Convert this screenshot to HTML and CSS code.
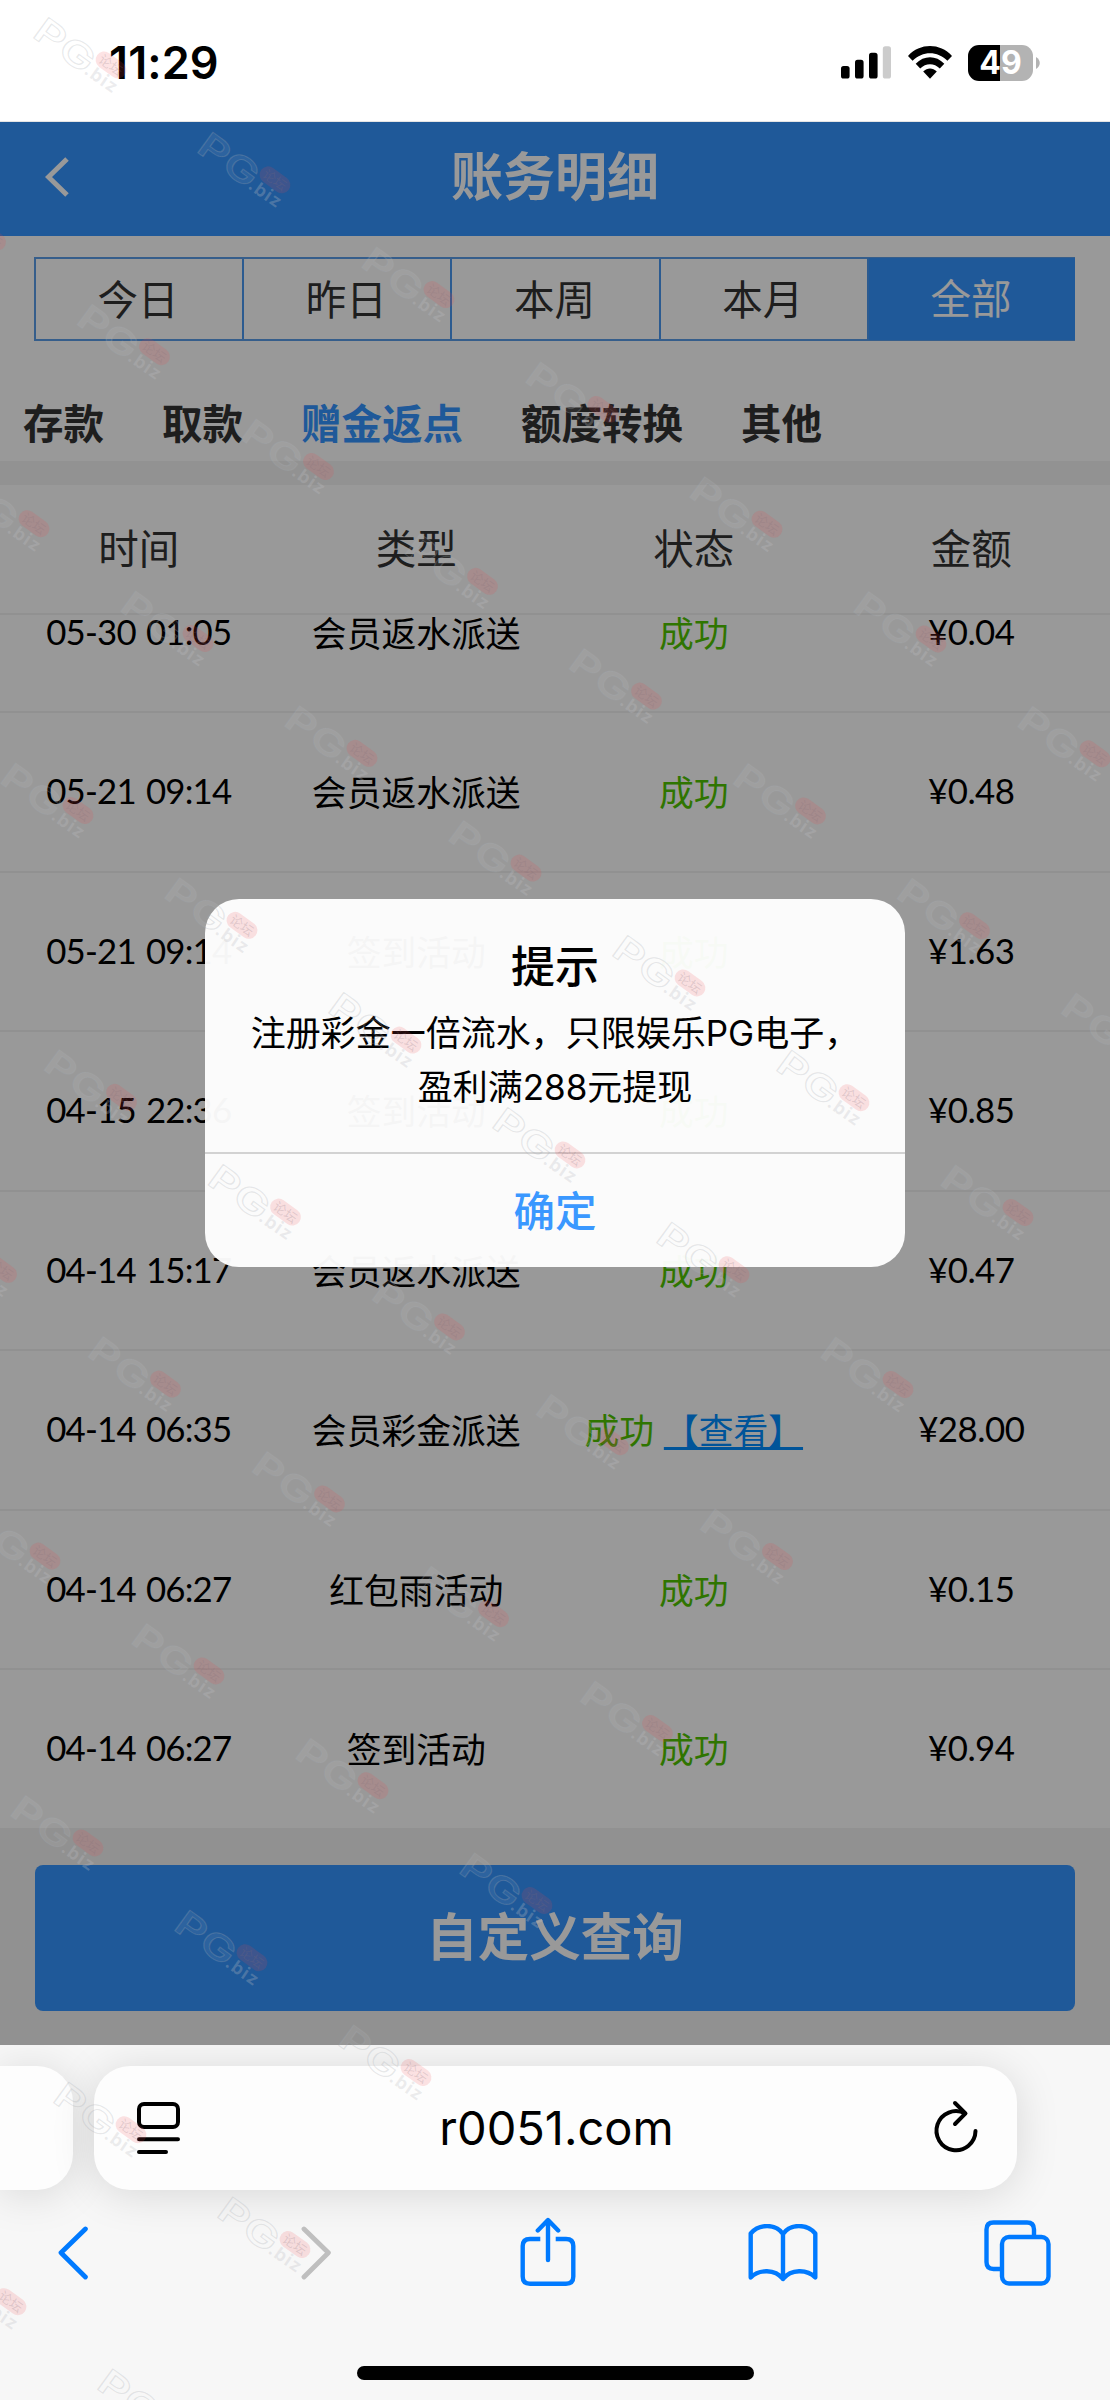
FILE: index.html
```html
<!DOCTYPE html>
<html lang="zh-CN">
<head>
<meta charset="utf-8">
<title>账务明细</title>
<link rel="stylesheet" href="styles.css">
</head>
<body>
<div class="phone">
  <header class="status">
    <span class="time">11:29</span>
    <div class="status-icons">
      <svg class="signal" width="50" height="33" viewBox="0 0 50 33">
        <rect x="0" y="20" width="8.6" height="12.5" rx="2.6"/>
        <rect x="14" y="13.8" width="8.6" height="18.7" rx="2.6"/>
        <rect x="28" y="6.8" width="8.6" height="25.7" rx="2.6"/>
        <rect x="41.8" y="0.3" width="8.2" height="32.2" rx="2.6" fill="#ccc"/>
      </svg>
      <svg class="wifi" width="44" height="33" viewBox="0 0 44 33">
        <path d="M0 9.9C12-3.3 32-3.3 44 9.9L39.4 14.8C29.6 4.7 14.4 4.7 4.6 14.8Z"/>
        <path d="M7.7 17.8C16 9.2 28 9.2 36.3 17.8L31.8 22.5C26.2 16.8 17.8 16.8 12.2 22.5Z"/>
        <path d="M15.2 25.6C19.3 21.6 24.7 21.6 28.8 25.6L22 32.8Z"/>
      </svg>
      <div class="battery"><span>49</span></div>
      <svg class="nub" width="4" height="12" viewBox="0 0 4 12"><path d="M0 0C5 3 5 9 0 12Z" fill="#b3b3b3"/></svg>
    </div>
  </header>

  <main class="page">
    <div class="titlebar">
      <svg class="back" width="24" height="40" viewBox="0 0 24 40"><path d="M22 2L3.500 20L22 38" fill="none" stroke="#fff" stroke-width="5"/></svg>
      <h1>账务明细</h1>
    </div>
    <nav class="ranges">
      <a>今日</a><a>昨日</a><a>本周</a><a>本月</a><a class="active">全部</a>
    </nav>
    <nav class="kinds">
      <a>存款</a><a>取款</a><a class="active">赠金返点</a><a>额度转换</a><a>其他</a>
    </nav>
    <div class="row head"><span>时间</span><span>类型</span><span>状态</span><span>金额</span></div>
    <div class="list">
      <div class="rows">
        <div class="row"><span>05-30 01:05</span><span>会员返水派送</span><span class="ok">成功</span><span>¥0.04</span></div>
        <div class="row"><span>05-21 09:14</span><span>会员返水派送</span><span class="ok">成功</span><span>¥0.48</span></div>
        <div class="row"><span>05-21 09:14</span><span>签到活动</span><span class="ok">成功</span><span>¥1.63</span></div>
        <div class="row"><span>04-15 22:36</span><span>签到活动</span><span class="ok">成功</span><span>¥0.85</span></div>
        <div class="row"><span>04-14 15:17</span><span>会员返水派送</span><span class="ok">成功</span><span>¥0.47</span></div>
        <div class="row"><span>04-14 06:35</span><span>会员彩金派送</span><span class="ok">成功 <a>【查看】</a></span><span>¥28.00</span></div>
        <div class="row"><span>04-14 06:27</span><span>红包雨活动</span><span class="ok">成功</span><span>¥0.15</span></div>
        <div class="row"><span>04-14 06:27</span><span>签到活动</span><span class="ok">成功</span><span>¥0.94</span></div>
      </div>
    </div>
    <footer class="query"><button>自定义查询</button></footer>

    <div class="mask"></div>
    <div class="dialog">
      <div class="dialog-body">
        <h2>提示</h2>
        <p>注册彩金一倍流水，只限娱乐PG电子，<br>盈利满288元提现</p>
      </div>
      <button>确定</button>
    </div>
  </main>

  <section class="browser">
    <div class="address-row">
      <div class="pill previous"></div>
      <div class="pill address">
        <svg width="44" height="54" viewBox="0 0 44 54" fill="none" stroke="#000" stroke-width="4" stroke-linecap="round">
          <rect x="2" y="3" width="39" height="23" rx="5"/><path d="M2 38.300H41M2 51H29"/>
        </svg>
        <span>r0051.com</span>
        <svg width="48" height="56" viewBox="0 0 48 56" fill="none" stroke="#000" stroke-width="4" stroke-linecap="round" stroke-linejoin="round">
          <path d="M43.500 31A19.500 19.500 0 1 1 33 13.400"/><path d="M23 3L33.500 13.400L23 24"/>
        </svg>
      </div>
    </div>
    <div class="tools">
      <svg width="32" height="54" viewBox="0 0 32 54" fill="none" stroke="#007aff" stroke-width="4.800" stroke-linecap="round" stroke-linejoin="round"><path d="M28.400 3L4 26.700L28.400 51"/></svg>
      <svg width="32" height="54" viewBox="0 0 32 54" fill="none" stroke="#bfbfbf" stroke-width="4.800" stroke-linecap="round" stroke-linejoin="round"><path d="M4 3L28.400 26.700L4 51"/></svg>
      <svg class="share" width="56" height="70" viewBox="0 0 56 70" fill="none" stroke="#007aff" stroke-width="4.400" stroke-linejoin="round">
        <path d="M20.300 22H10Q2.700 22 2.700 29V59.500Q2.700 66.700 10 66.700H46Q53.300 66.700 53.300 59.500V29Q53.300 22 46 22H35.700"/>
        <path d="M28 43V3.500M17.800 13.500L28 3L38.200 13.500" stroke-linecap="round"/>
      </svg>
      <svg width="70" height="58" viewBox="0 0 70 58" fill="none" stroke="#007aff" stroke-width="4.400" stroke-linejoin="round" stroke-linecap="round">
        <path d="M35 10C28-.5 11-.5 2.700 9.500V53.500C11 45 27 45 35 55C43 45 59 45 67.300 53.500V9.500C59-.5 42-.5 35 10ZM35 10V55"/>
      </svg>
      <svg width="67" height="66" viewBox="0 0 67 66" fill="none" stroke="#007aff" stroke-width="4.400">
        <path d="M50 15V9.500Q50 2.500 43 2.500H9.500Q2.500 2.500 2.500 9.500V42Q2.500 49 9.500 49H17"/>
        <rect x="18" y="17" width="46.500" height="46.500" rx="7"/>
      </svg>
    </div>
    <div class="home"></div>
  </section>

  <svg class="watermark" width="1110" height="2400" viewBox="0 0 1110 2400">
    <defs>
      <g id="mark">
        <text class="mark-pg" transform="translate(-2 21) rotate(36)" textLength="66" lengthAdjust="spacingAndGlyphs">PG</text>
        <g transform="translate(78 50) rotate(36)">
          <rect class="mark-pill" x="-17" y="-8.500" width="34" height="17" rx="8.500"/>
          <text class="mark-cn" x="0" y="5" text-anchor="middle">论坛</text>
        </g>
        <text class="mark-biz" transform="translate(50 58) rotate(35)" textLength="36">.biz</text>
      </g>
      <g id="diagonal">
        <use href="#mark"/>
        <use href="#mark" x="-164" y="-114.800"/>
        <use href="#mark" x="-328" y="-229.600"/>
        <use href="#mark" x="-492" y="-344.400"/>
        <use href="#mark" x="-656" y="-459.200"/>
        <use href="#mark" x="-820" y="-574"/>
        <use href="#mark" x="-984" y="-688.800"/>
        <use href="#mark" x="-1148" y="-803.600"/>
      </g>
    </defs>
    <use href="#diagonal" x="1181" y="818.600"/>
    <use href="#diagonal" x="1060.500" y="990.500"/>
    <use href="#diagonal" x="940" y="1162.500"/>
    <use href="#diagonal" x="820" y="1334.500"/>
    <use href="#diagonal" x="699.500" y="1506.500"/>
    <use href="#diagonal" x="579.500" y="1678.500"/>
    <use href="#diagonal" x="459" y="1850.500"/>
    <use href="#diagonal" x="338" y="2022.500"/>
    <use href="#diagonal" x="217" y="2194.500"/>
    <use href="#diagonal" x="97" y="2366.500"/>
  </svg>
</div>
</body>
</html>
```
FILE: styles.css
```css
* { box-sizing: border-box; }
body { margin: 0; }
h1, h2, p { margin: 0; }
button { border: 0; padding: 0; font-family: inherit; }
svg { display: block; }

.phone {
  position: relative;
  display: flex;
  flex-direction: column;
  width: 1110px;
  height: 2400px;
  overflow: hidden;
  background: #fff;
  font-family: "Noto Sans CJK SC", sans-serif;
  color: #000;
}

/* status bar */
.status {
  display: flex;
  justify-content: space-between;
  height: 122px;
  padding: 0 70px 0 109px;
  border-bottom: 1px solid #e4e4e4;
}
.time {
  margin-top: 36px;
  font: 600 45px/54px Inter, sans-serif;
  letter-spacing: 0.1px;
}
.status-icons { display: flex; padding-top: 46px; }
.wifi { margin-left: 17px; }
.battery {
  width: 65px;
  height: 36px;
  margin: -1px 0 0 16px;
  border-radius: 11px;
  background: linear-gradient(90deg, #000 32px, #b3b3b3 32px);
  color: #fff;
  font: 700 32px/36px Inter, sans-serif;
  text-align: center;
}
.nub { margin: 11px 0 0 3px; }

/* page */
.page {
  position: relative;
  display: flex;
  flex-direction: column;
  height: 1923px;
  background: #fff;
}
.titlebar {
  display: grid;
  grid-template-columns: 150px 1fr 150px;
  height: 114px;
  background: #3494ff;
  color: #fff;
}
.back { margin: 35px 0 0 45px; }
.titlebar h1 {
  font-size: 52px;
  font-weight: 700;
  line-height: 104px;
  text-align: center;
}
.ranges {
  display: flex;
  height: 84px;
  margin: 21px 35px 0 34px;
  border: 2px solid #5a9de8;
}
.ranges a {
  flex: 1;
  padding-right: 2px;
  color: #333;
  font-size: 40.500px;
  line-height: 77px;
  text-align: center;
}
.ranges a + a { border-left: 2px solid #4a98f0; }
.ranges a.active { margin: -1px -2px -1px 0; background: #3494ff; color: #fff; }
.kinds {
  display: flex;
  gap: 58px;
  height: 144px;
  padding: 51px 0 0 23px;
  border-bottom: 24px solid #f3f3f3;
  color: #333;
  font-size: 40.500px;
  font-weight: 700;
  line-height: 60px;
}
.kinds .active { color: #3494ff; }

.row {
  display: grid;
  grid-template-columns: repeat(4, 1fr);
  height: 159.500px;
  border-bottom: 2px solid #f2f2f2;
  font-size: 34.800px;
  line-height: 156px;
  text-align: center;
  white-space: nowrap;
}
.rows .row span:first-child,
.rows .row span:last-child {
  font-family: Lato, "Noto Sans CJK SC", sans-serif;
  letter-spacing: -0.5px;
}
.rows .row span:first-child {
  letter-spacing: -0.8px;
  word-spacing: 2px;
}
.row.head {
  height: 130px;
  color: #333;
  font-size: 40.500px;
  line-height: 124px;
}
.list { height: 1214px; overflow: hidden; }
.rows { margin-top: -61.500px; }
.row .ok { word-spacing: 2px; }
.ok { color: #4fc400; }
.ok a {
  color: #008cff;
  text-decoration: underline;
  text-decoration-thickness: 3px;
  text-underline-offset: 3px;
}
.query {
  flex: 1;
  padding: 36px 35px 0;
  background: #f2f2f2;
}
.query button {
  display: block;
  width: 100%;
  height: 146px;
  padding-bottom: 10px;
  border-radius: 8px;
  background: #3494ff;
  color: #fff;
  font-size: 51.500px;
  font-weight: 700;
}

/* dialog */
.mask {
  position: absolute;
  inset: 0;
  background: rgba(0, 0, 0, .4);
}
.dialog {
  position: absolute;
  top: 777px;
  left: 205px;
  width: 700px;
  height: 368px;
  border-radius: 34px;
  background: rgba(255, 255, 255, .96);
  text-align: center;
}
.dialog-body {
  height: 255px;
  padding-top: 33px;
  border-bottom: 2px solid #d2d2d2;
}
.dialog h2 { font-size: 44px; font-weight: 500; line-height: 64px; }
.dialog p {
  margin-top: 10px;
  font: 35px/54px Inter, "Noto Sans CJK SC", sans-serif;
  white-space: nowrap;
}
.dialog button {
  width: 100%;
  height: 110px;
  background: none;
  color: #3a98ff;
  font-size: 41.500px;
  font-weight: 500;
}

/* browser chrome */
.browser {
  display: flex;
  flex-direction: column;
  height: 355px;
  background: #f7f7f7;
  overflow: hidden;
}
.address-row {
  display: flex;
  gap: 21px;
  padding-top: 21px;
}
.pill {
  height: 124px;
  background: #fdfdfd;
  box-shadow: 0 4px 44px rgba(0, 0, 0, .13);
}
.previous { width: 73px; border-radius: 0 36px 36px 0; }
.address {
  display: flex;
  justify-content: space-between;
  align-items: center;
  width: 923px;
  padding: 0 37px 0 43px;
  border-radius: 36px;
}
.address span {
  font: 400 47px/60px Inter, sans-serif;
}
.tools {
  display: grid;
  grid-template-columns: 243px 220px 228px 236px 67px;
  height: 126px;
  padding: 0 0 0 57px;
  align-items: center;
}
.share { margin-bottom: 3px; }
.home {
  width: 397px;
  height: 14px;
  margin: 50px auto 0;
  border-radius: 7px;
  background: #000;
}

/* repeated site mark over the whole screen */
.watermark { position: absolute; top: 0; left: 0; pointer-events: none; }
.mark-pg {
  font: 600 35px Inter, sans-serif;
  fill: rgba(255, 255, 255, .07);
  stroke: rgba(165, 170, 176, .27);
  stroke-width: 1px;
}
.mark-pill { fill: rgba(240, 70, 75, .15); }
.mark-cn { font: 400 13px "Noto Sans CJK SC", sans-serif; fill: rgba(130, 110, 120, .22); }
.mark-biz {
  font: 700 18px Inter, sans-serif;
  fill: rgba(190, 190, 195, .28);
}
```
